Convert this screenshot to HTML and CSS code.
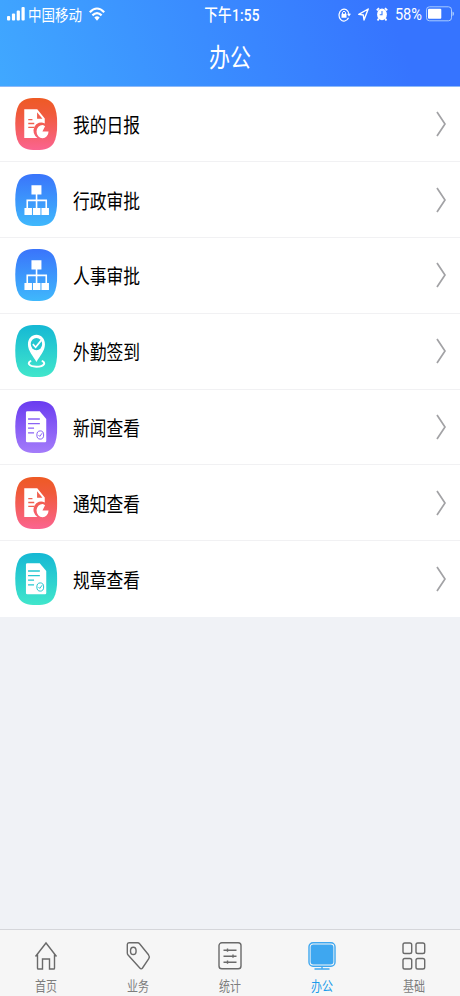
FILE: index.html
```html
<!DOCTYPE html>
<html lang="zh-CN">
<head>
    <meta charset="UTF-8">
    <meta name="viewport" content="width=device-width, initial-scale=1.0">
    <title>办公</title>
    <link rel="stylesheet" href="styles.css">
</head>
<body>

    <!-- 图标定义 -->
    <svg class="defs" width="0" height="0">
        <defs>
            <linearGradient id="red" x1="0" y1="0" x2="0" y2="1">
                <stop offset="0" stop-color="#ee5a24"/><stop offset=".3" stop-color="#f05a3a"/><stop offset="1" stop-color="#fb6490"/>
            </linearGradient>
            <linearGradient id="blue" x1="0" y1="0" x2="0" y2="1">
                <stop offset="0" stop-color="#3a74fb"/><stop offset="1" stop-color="#3fb8fc"/>
            </linearGradient>
            <linearGradient id="teal" x1="0" y1="0" x2="0" y2="1">
                <stop offset="0" stop-color="#15b8d4"/><stop offset="1" stop-color="#41e6cb"/>
            </linearGradient>
            <linearGradient id="purple" x1="0" y1="0" x2="0" y2="1">
                <stop offset="0" stop-color="#6a3cf0"/><stop offset="1" stop-color="#a47cfa"/>
            </linearGradient>
        </defs>
        <symbol id="tile" viewBox="0 0 42 52">
            <path d="M21 0C30 0 35.5 1.8 38.5 7 41 11.5 42 18 42 26S41 40.5 38.5 45C35.5 50.2 30 52 21 52S6.500 50.2 3.500 45C1 40.5 0 34 0 26S1 11.5 3.500 7C6.500 1.8 12 0 21 0z"/>
        </symbol>
        <symbol id="report" viewBox="0 0 42 52">
            <path fill="#fff" d="M9 11.3H22L29.5 20.5V25.5A7.4 8 0 0 0 22.2 39.9H9z"/>
            <path class="cut" d="M13 21.6H17.2M13 25.5H19M13 29.4H19" fill="none" stroke-width="1.4"/>
            <path class="cut-fill" d="M21.8 14.3L27.2 20.8H21.8z"/>
            <path fill="#fff" d="M27.5 27A6 6.6 0 1 0 33.3 33.6H27.2L29.8 28.2A6 6.6 0 0 0 27.5 27z"/>
        </symbol>
        <symbol id="tree" viewBox="0 0 42 52">
            <path fill="#fff" d="M16.2 11.2h10v9.4h-10zM9.2 33.9h7.5v7.2H9.2zM17.7 33.9h7.5v7.2h-7.5zM26.2 33.9h7.5v7.2h-7.5z"/>
            <path fill="none" stroke="#fff" stroke-width="1.6" d="M21.3 20V34M12 34V26.4H31V34"/>
        </symbol>
        <symbol id="pin" viewBox="0 0 42 52">
            <path fill="#fff" d="M21.2 9.8C16.4 9.8 12.7 13.7 12.7 19.5 12.7 26 18 31 21.2 37 24.5 31 29.7 26 29.7 19.5 29.7 13.7 26 9.8 21.2 9.8z"/>
            <ellipse class="cut-fill" cx="21.2" cy="19.1" rx="5.7" ry="6.2"/>
            <path fill="none" stroke="#fff" stroke-width="1.7" d="M17.6 19.1L20.4 22.3 26 15.4"/>
            <path fill="none" stroke="#fff" stroke-width="2" d="M16 35.9C12 37 12.3 41.5 21.2 41.7 30 41.5 30.6 37 26.5 35.9"/>
        </symbol>
        <symbol id="note" viewBox="0 0 42 52">
            <path fill="#fff" d="M12 10.3H24.5L31 18V40Q31 41.3 29.8 41.3H12Q10.7 41.3 10.7 40V11.6Q10.7 10.3 12 10.3z"/>
            <path class="cut" fill="none" stroke-width="1.3" d="M12.8 18H24.6M12.8 22.6H24.6M12.8 27.2H18.8M12.8 31.8H18.8"/>
            <ellipse class="cut" cx="25" cy="34" rx="3.4" ry="4.1" fill="none" stroke-width="1"/>
            <path class="cut" fill="none" stroke-width="1" d="M23.3 34.1L24.5 35.4 26.9 32.2"/>
        </symbol>
    </svg>

    <header class="header">
        <div class="status">
            <div class="status-left">
                <svg width="18" height="14" viewBox="0 0 18 14" fill="#fff">
                    <rect x="0" y="9" width="3.2" height="4.5" rx="1"/>
                    <rect x="4.9" y="6.5" width="3.2" height="7" rx="1"/>
                    <rect x="9.7" y="3.5" width="3.2" height="10" rx="1"/>
                    <rect x="14.5" y="0" width="3.2" height="13.5" rx="1"/>
                </svg>
                <span class="carrier tall">中国移动</span>
                <svg class="wifi" width="16" height="14" viewBox="0 0 16 14">
                    <path fill="none" stroke="#fff" stroke-width="2.2" d="M.8 5.2Q8-2.2 15.2 5.2M3.4 8.4Q8 3.8 12.6 8.4"/>
                    <path fill="#fff" d="M5.3 10.4Q8 8.2 10.7 10.4L8 13.7z"/>
                </svg>
            </div>
            <span class="time tall">下午1:55</span>
            <div class="status-right">
                <svg width="13" height="15" viewBox="0 0 13 15">
                    <path fill="none" stroke="#fff" stroke-width="1.2" d="M10.5 10.8A5 6 0 1 1 11 7.3"/>
                    <path fill="#fff" d="M9 6.8H13L11 9.6zM3.5 6.8H8.5V10.8H3.5z"/>
                    <path fill="none" stroke="#fff" d="M4.500 7V5.4Q6 2.8 7.5 5.4V7"/>
                </svg>
                <svg width="11" height="13" viewBox="0 0 11 13">
                    <path fill="none" stroke="#fff" stroke-width="1.4" stroke-linejoin="round" d="M10.2 1L.8 6.4 5.3 7 6 12z"/>
                </svg>
                <svg width="12" height="14" viewBox="0 0 12 14">
                    <ellipse cx="6" cy="7.4" rx="4.9" ry="5.8" fill="#fff"/>
                    <path fill="none" stroke="#fff" stroke-width="1.8" d="M.8 3.4L3 1.2M11.2 3.4L9 1.2M2.8 11.5L1.6 13.4M9.2 11.5L10.4 13.4"/>
                    <path fill="none" stroke="#3a80ff" stroke-width="1.1" d="M6 4V7.8H3.7"/>
                </svg>
                <span class="percent tall">58%</span>
                <svg class="battery" width="28" height="16" viewBox="0 0 28 16">
                    <rect x=".5" y=".8" width="25" height="14" rx="3" fill="none" stroke="#a9ccff" stroke-width="1"/>
                    <rect x="2" y="2.8" width="13.3" height="10" rx="1" fill="#fff"/>
                    <path fill="#a9ccff" d="M26.5 5.6Q28 6 28 7.8T26.5 10z"/>
                </svg>
            </div>
        </div>
        <h1 class="title"><span class="tall">办公</span></h1>
    </header>

    <!-- 功能列表 -->
    <main class="list">
        <a class="item">
            <svg class="icon red"><use href="#tile"/><use href="#report"/></svg>
            <span class="label tall">我的日报</span>
            <svg class="arrow" viewBox="0 0 10 26"><path d="M1 1L9 13 1 25"/></svg>
        </a>
        <a class="item">
            <svg class="icon blue"><use href="#tile"/><use href="#tree"/></svg>
            <span class="label tall">行政审批</span>
            <svg class="arrow" viewBox="0 0 10 26"><path d="M1 1L9 13 1 25"/></svg>
        </a>
        <a class="item">
            <svg class="icon blue"><use href="#tile"/><use href="#tree"/></svg>
            <span class="label tall">人事审批</span>
            <svg class="arrow" viewBox="0 0 10 26"><path d="M1 1L9 13 1 25"/></svg>
        </a>
        <a class="item">
            <svg class="icon teal"><use href="#tile"/><use href="#pin"/></svg>
            <span class="label tall">外勤签到</span>
            <svg class="arrow" viewBox="0 0 10 26"><path d="M1 1L9 13 1 25"/></svg>
        </a>
        <a class="item">
            <svg class="icon purple"><use href="#tile"/><use href="#note"/></svg>
            <span class="label tall">新闻查看</span>
            <svg class="arrow" viewBox="0 0 10 26"><path d="M1 1L9 13 1 25"/></svg>
        </a>
        <a class="item">
            <svg class="icon red"><use href="#tile"/><use href="#report"/></svg>
            <span class="label tall">通知查看</span>
            <svg class="arrow" viewBox="0 0 10 26"><path d="M1 1L9 13 1 25"/></svg>
        </a>
        <a class="item">
            <svg class="icon teal"><use href="#tile"/><use href="#note"/></svg>
            <span class="label tall">规章查看</span>
            <svg class="arrow" viewBox="0 0 10 26"><path d="M1 1L9 13 1 25"/></svg>
        </a>
    </main>

    <!-- 底部导航 -->
    <nav class="tabbar">
        <a class="tab">
            <svg viewBox="0 0 28 30"><path d="M3.5 15.5L14 2 24.5 15.5M5.5 13.5V27.2Q5.5 28 6.3 28H10.5V18H17.5V28H21.7Q22.5 28 22.5 27.2V13.5"/></svg>
            <span class="tall">首页</span>
        </a>
        <a class="tab">
            <svg viewBox="0 0 28 30"><path d="M5 1.8H13.5Q14.8 1.8 15.8 3L24.5 13.8Q26 15.8 24.8 17.6L18.5 27Q17.2 28.7 15.8 27L4.3 14.3Q3.3 13.2 3.3 12V3.6Q3.3 1.8 5 1.8z"/><ellipse cx="9.3" cy="9.9" rx="2.8" ry="3.6"/></svg>
            <span class="tall">业务</span>
        </a>
        <a class="tab">
            <svg viewBox="0 0 28 30"><rect x="3" y="1.8" width="22" height="26" rx="2.8"/><path d="M7.5 9.2H20.5M7.5 15.2H20.5M7.5 21.2H20.5M11.5 7.6V10.8M17 13.6V16.8M11.5 19.6V22.8"/></svg>
            <span class="tall">统计</span>
        </a>
        <a class="tab active">
            <svg viewBox="0 0 28 30"><rect x="1" y="1.8" width="26" height="23.5" rx="4"/><rect class="screen" x="3.3" y="4.2" width="21.4" height="18.6" rx="2"/><path d="M14 25.5V27.8M6.5 28H21.5"/></svg>
            <span class="tall">办公</span>
        </a>
        <a class="tab">
            <svg viewBox="0 0 28 30"><rect x="3" y="2" width="8.7" height="10.5" rx="1.8"/><rect x="16" y="2" width="8.7" height="10.5" rx="1.8"/><rect x="3" y="17.5" width="8.7" height="10.5" rx="1.8"/><rect x="16" y="17.5" width="8.7" height="10.5" rx="1.8"/></svg>
            <span class="tall">基础</span>
        </a>
    </nav>

</body>
</html>
```
FILE: styles.css
```css
/* 全局样式 */
* {
    box-sizing: border-box;
}

body {
    margin: 0;
    height: 996px;
    display: flex;
    flex-direction: column;
    background-color: #f0f2f6;
    color: #000;
    font-family: "Liberation Sans", "Noto Sans CJK SC", sans-serif;
    overflow: hidden;
}

svg {
    display: block;
    flex: none;
}

.defs {
    position: absolute;
}

/* 竖向拉长的文字 */
.tall {
    display: block;
    white-space: nowrap;
    transform: scaleY(1.22);
}

/* 顶部 */
.header {
    height: 86.5px;
    flex: none;
    color: #fff;
    background: linear-gradient(70deg, #40a8ff 0%, #3a8cff 45%, #3674ff 85%);
    border-bottom: 1px solid #8db9f8;
}

.status {
    height: 28px;
    display: grid;
    grid-template-columns: 1fr auto 1fr;
    align-items: center;
    padding: 0 6px 0 8px;
}

.status-left,
.status-right {
    display: flex;
    align-items: center;
}

.status-left {
    margin-left: -1px;
}

.status-right {
    justify-content: flex-end;
    gap: 7px;
}

.carrier {
    margin-left: 3px;
    font-size: 13.5px;
}

.wifi {
    margin-left: 7px;
}

.time {
    padding-left: 2px;
    font-family: Roboto, "Noto Sans CJK SC", sans-serif;
    font-size: 13.6px;
    font-weight: 500;
    letter-spacing: .25px;
}

.percent {
    font-family: Roboto, sans-serif;
    font-size: 14.6px;
    transform: scaleY(1.15);
}

.battery {
    margin-left: -3px;
}

.title {
    margin: 0;
    height: 55px;
    display: flex;
    align-items: center;
    justify-content: center;
    font-size: 21px;
    font-weight: 400;
}

/* 列表 */
.list {
    flex: none;
    background-color: #fff;
}

.item {
    height: 75.75px;
    display: flex;
    align-items: center;
    padding: 0 14px 0 15px;
    border-bottom: 1px solid #f1f1f3;
}

.item:last-child {
    border-bottom: none;
}

.icon {
    width: 42.5px;
    height: 52px;
}

.red {
    fill: url(#red);
    --tone: #f1604f;
}

.blue {
    fill: url(#blue);
}

.teal {
    fill: url(#teal);
    --tone: #25c7d1;
}

.purple {
    fill: url(#purple);
    --tone: #8a62f5;
}

.cut {
    stroke: var(--tone);
}

.cut-fill {
    fill: var(--tone);
}

.label {
    flex: 1;
    margin-left: 15.5px;
    font-size: 16.8px;
}

.arrow {
    width: 10px;
    height: 26px;
    fill: none;
    stroke: #a2a2a5;
    stroke-width: 1.7;
}

/* 底部导航 */
.tabbar {
    height: 67px;
    flex: none;
    margin-top: auto;
    display: flex;
    background-color: #f6f6f6;
    border-top: 1px solid #d5d6da;
}

.tab {
    flex: 1;
    display: flex;
    flex-direction: column;
    align-items: center;
    padding-top: 11px;
    color: #7d7d7d;
    font-size: 11px;
    line-height: 16px;
}

.tab svg {
    width: 28px;
    height: 30px;
    margin-bottom: 7px;
    fill: none;
    stroke: #6a6a6a;
    stroke-width: 1.4;
}

.active {
    color: #1c9bea;
}

.active svg {
    stroke: #3ea7f0;
}

.active .screen {
    fill: #3ea7f0;
}
```
